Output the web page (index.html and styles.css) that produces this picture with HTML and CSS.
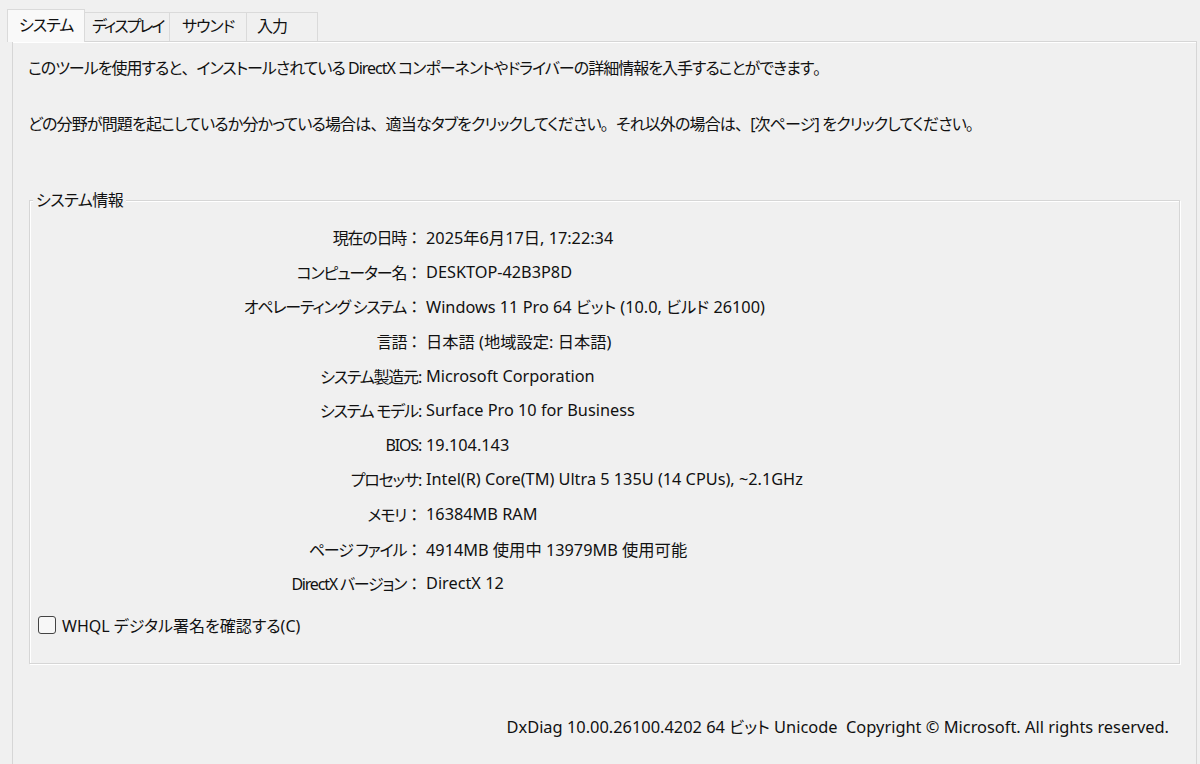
FILE: index.html
```html
<!DOCTYPE html>
<html lang="ja">
<head>
<meta charset="utf-8">
<title>DirectX 診断ツール</title>
<link rel="stylesheet" href="styles.css">
</head>
<body>
<div class="tabs">
  <div class="tab selected">システム</div>
  <div class="tab wide">ディスプレイ</div>
  <div class="tab">サウンド</div>
  <div class="tab">入力</div>
</div>
<div class="panel">
  <p class="intro">このツールを使用すると<span class="fw">、</span>インストールされている DirectX コンポーネントやドライバーの詳細情報を入手することができます<span class="fw">。</span></p>
  <p class="intro second">どの分野が問題を起こしているか分かっている場合は<span class="fw">、</span>適当なタブをクリックしてください<span class="fw">。</span>それ以外の場合は<span class="fw">、</span>[次ページ] をクリックしてください<span class="fw">。</span></p>
  <div class="group">
    <span class="legend">システム情報</span>
    <div class="rows">
      <div class="row"><span class="label">現在の日時<span class="fw">：</span></span><span class="value">2025年6月17日, 17:22:34</span></div>
      <div class="row"><span class="label">コンピューター名<span class="fw">：</span></span><span class="value">DESKTOP-42B3P8D</span></div>
      <div class="row"><span class="label">オペレーティング システム<span class="fw">：</span></span><span class="value">Windows 11 Pro 64 ビット (10.0, ビルド 26100)</span></div>
      <div class="row"><span class="label">言語<span class="fw">：</span></span><span class="value">日本語 (地域設定: 日本語)</span></div>
      <div class="row"><span class="label">システム製造元:</span><span class="value">Microsoft Corporation</span></div>
      <div class="row"><span class="label">システム モデル:</span><span class="value">Surface Pro 10 for Business</span></div>
      <div class="row"><span class="label">BIOS:</span><span class="value">19.104.143</span></div>
      <div class="row"><span class="label">プロセッサ:</span><span class="value">Intel(R) Core(TM) Ultra 5 135U (14 CPUs), ~2.1GHz</span></div>
      <div class="row"><span class="label">メモリ<span class="fw">：</span></span><span class="value">16384MB RAM</span></div>
      <div class="row"><span class="label">ページ ファイル<span class="fw">：</span></span><span class="value">4914MB 使用中 13979MB 使用可能</span></div>
      <div class="row"><span class="label">DirectX バージョン<span class="fw">：</span></span><span class="value">DirectX 12</span></div>
    </div>
    <label class="check"><span class="box"></span><span>WHQL デジタル署名を確認する(C)</span></label>
  </div>
  <div class="footer">DxDiag 10.00.26100.4202 64 ビット Unicode&nbsp; Copyright © Microsoft. All rights reserved.</div>
</div>
</body>
</html>
```
FILE: styles.css
```css
html, body {
  margin: 0;
  padding: 0;
  background: #f0f0f0;
  height: 100%;
  overflow: hidden;
}
body {
  font-family: "Noto Sans", "Noto Sans CJK JP", sans-serif;
  font-size: 16px;
  color: #111;
  font-feature-settings: "palt";
}
.fw {
  font-feature-settings: normal;
}
.tabs {
  display: flex;
  align-items: flex-end;
  padding: 8px 0 0 7px;
  height: 41px;
  box-sizing: border-box;
  position: relative;
  z-index: 1;
}
.tab {
  width: 77px;
  height: 29px;
  line-height: 27px;
  padding: 0 0 0 12px;
  letter-spacing: -1px;
  border: 1px solid #dadada;
  border-bottom: none;
  border-left: none;
  box-sizing: border-box;
  background: #f0f0f0;
  white-space: nowrap;
}
.tab.wide {
  width: 85px;
  padding-left: 7px;
  letter-spacing: -2px;
}
.tab:last-child {
  width: 71px;
  padding-left: 10px;
}
.tab.selected {
  width: 78px;
  height: 33px;
  line-height: 31px;
  background: #f9f9f9;
  border-left: 1px solid #dadada;
  margin-bottom: -1px;
  padding-left: 11px;
}
.panel {
  margin: 0 3px 0 12px;
  border: 1px solid #d6d6d6;
  box-shadow: inset 0 1px 0 #fff;
  height: 800px;
  padding: 16px 15px 0 15px;
}
.intro {
  margin: 0;
  line-height: 20px;
  height: 20px;
  letter-spacing: -1px;
  white-space: nowrap;
}
.intro.second {
  margin-top: 36px;
  letter-spacing: -0.85px;
}
.group {
  position: relative;
  margin: 66px 1px 0 1px;
  border: 1px solid #d6d6d6;
  box-shadow: inset 1px 1px 0 #fff, 1px 1px 0 #fff;
  padding: 19px 0 28px 0;
}
.legend {
  position: absolute;
  left: 3px;
  top: -11px;
  padding: 0 3px;
  line-height: 20px;
  letter-spacing: -0.5px;
  background: #f0f0f0;
}
.row {
  display: flex;
  height: 34.6px;
  align-items: center;
  white-space: nowrap;
}
.label {
  width: 391px;
  text-align: right;
  letter-spacing: -1.2px;
}
.value {
  margin-left: 5px;
  font-size: 16.3px;
}
.check {
  display: flex;
  align-items: center;
  gap: 6px;
  margin: 14px 0 0 8px;
  height: 20px;
}
.box {
  width: 16px;
  height: 16px;
  border: 1px solid #444;
  border-radius: 3px;
  background: #f7f7f7;
}
.footer {
  margin-top: 53px;
  padding-right: 12px;
  text-align: right;
  line-height: 20px;
  font-size: 16.4px;
  white-space: nowrap;
}
```
